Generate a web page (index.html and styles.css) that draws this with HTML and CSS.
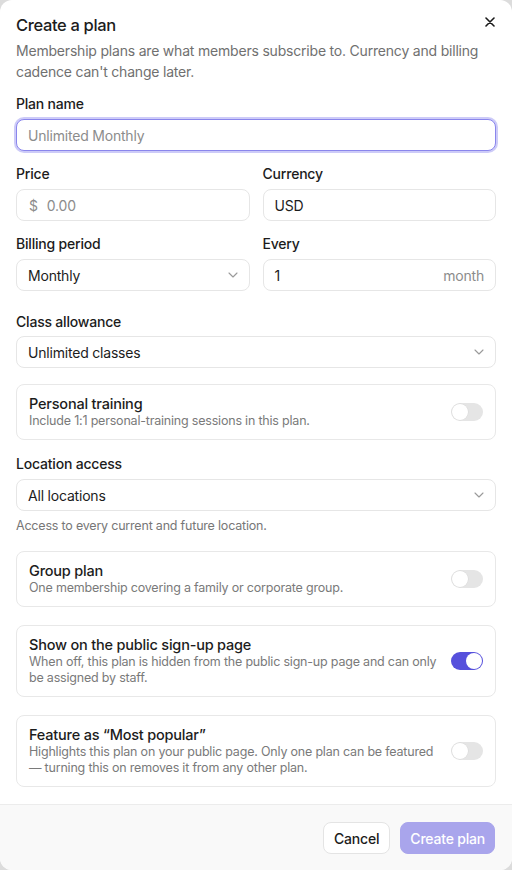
FILE: index.html
```html
<!DOCTYPE html>
<html lang="en">
<head>
<meta charset="utf-8">
<title>Create a plan</title>
<link rel="stylesheet" href="styles.css">
</head>
<body>
<div class="modal">
  <div class="body">
    <div class="header">
      <h1 class="title">Create a plan</h1>
      <button class="close" aria-label="Close">
        <svg width="10" height="10" viewBox="0 0 10 10"><path d="M1 1L9 9M9 1L1 9" stroke="#1a1a1a" stroke-width="1.6" stroke-linecap="round"/></svg>
      </button>
    </div>
    <p class="desc">Membership plans are what members subscribe to. Currency and billing cadence can't change later.</p>

    <div class="field f-name">
      <label class="label">Plan name</label>
      <div class="input focus"><span class="placeholder">Unlimited Monthly</span></div>
    </div>

    <div class="row f-row1">
      <div class="field">
        <label class="label">Price</label>
        <div class="input"><span class="prefix">$</span><span class="placeholder">0.00</span></div>
      </div>
      <div class="field">
        <label class="label">Currency</label>
        <div class="input"><span class="value">USD</span></div>
      </div>
    </div>

    <div class="row f-row2">
      <div class="field">
        <label class="label">Billing period</label>
        <div class="input select"><span class="value">Monthly</span>
          <svg class="chev" width="10" height="6" viewBox="0 0 10 6"><path d="M1 1L5 5L9 1" fill="none" stroke="#9a9a9a" stroke-width="1.1" stroke-linecap="round" stroke-linejoin="round"/></svg>
        </div>
      </div>
      <div class="field">
        <label class="label">Every</label>
        <div class="input select"><span class="value">1</span><span class="suffix">month</span></div>
      </div>
    </div>

    <div class="field f-class">
      <label class="label">Class allowance</label>
      <div class="input select"><span class="value">Unlimited classes</span>
        <svg class="chev" width="10" height="6" viewBox="0 0 10 6"><path d="M1 1L5 5L9 1" fill="none" stroke="#9a9a9a" stroke-width="1.1" stroke-linecap="round" stroke-linejoin="round"/></svg>
      </div>
    </div>

    <div class="card c-personal">
      <div class="card-text">
        <div class="card-title">Personal training</div>
        <div class="card-desc">Include 1:1 personal-training sessions in this plan.</div>
      </div>
      <span class="toggle"><span class="knob"></span></span>
    </div>

    <div class="field f-loc">
      <label class="label">Location access</label>
      <div class="input select"><span class="value">All locations</span>
        <svg class="chev" width="10" height="6" viewBox="0 0 10 6"><path d="M1 1L5 5L9 1" fill="none" stroke="#9a9a9a" stroke-width="1.1" stroke-linecap="round" stroke-linejoin="round"/></svg>
      </div>
      <div class="help">Access to every current and future location.</div>
    </div>

    <div class="card c-group">
      <div class="card-text">
        <div class="card-title">Group plan</div>
        <div class="card-desc">One membership covering a family or corporate group.</div>
      </div>
      <span class="toggle"><span class="knob"></span></span>
    </div>

    <div class="card c-show">
      <div class="card-text">
        <div class="card-title">Show on the public sign-up page</div>
        <div class="card-desc">When off, this plan is hidden from the public sign-up page and can only be assigned by staff.</div>
      </div>
      <span class="toggle on"><span class="knob"></span></span>
    </div>

    <div class="card c-feature">
      <div class="card-text">
        <div class="card-title">Feature as “Most popular”</div>
        <div class="card-desc">Highlights this plan on your public page. Only one plan can be featured — turning this on removes it from any other plan.</div>
      </div>
      <span class="toggle"><span class="knob"></span></span>
    </div>
  </div>

  <div class="footer">
    <button class="btn btn-cancel">Cancel</button>
    <button class="btn btn-primary">Create plan</button>
  </div>
</div>
</body>
</html>
```

FILE: styles.css
```css
* { box-sizing: border-box; }
html, body { margin: 0; padding: 0; }
body {
  background: #dcdcdc;
  font-family: Inter, "Noto Sans", "Liberation Sans", sans-serif;
  color: #1c1c1c;
  letter-spacing: -0.2px;
  -webkit-font-smoothing: antialiased;
}
.modal {
  width: 512px;
  height: 870px;
  background: #fff;
  border-radius: 12px;
  overflow: hidden;
  display: flex;
  flex-direction: column;
}
.body {
  flex: 1;
  padding: 13px 16px 0;
}
.header {
  display: flex;
  justify-content: space-between;
  align-items: center;
}
.title {
  margin: 0;
  font-size: 16.5px;
  line-height: 24px;
  font-weight: 450;
  letter-spacing: -0.35px;
}
.close {
  border: 0;
  background: none;
  padding: 0;
  width: 16px;
  height: 16px;
  display: flex;
  align-items: center;
  justify-content: center;
  margin-right: -2px;
  margin-top: -6px;
}
.desc {
  margin: 3px 0 0;
  font-size: 14px;
  line-height: 21px;
  color: #707070;
}
.field { display: flex; flex-direction: column; }
.label {
  font-size: 14px;
  line-height: 20px;
  font-weight: 450;
  margin-bottom: 5px;
}
.input {
  height: 32px;
  border: 1px solid #e6e6e6;
  border-radius: 8px;
  display: flex;
  align-items: center;
  padding: 0 11px;
  font-size: 14px;
  background: #fff;
}
.input.focus {
  border-color: #8a86ec;
  box-shadow: 0 0 0 2px #cdcbf8;
}
.placeholder { color: #8c8c8c; }
.prefix { color: #8c8c8c; margin: 0 9px 0 1px; }
.value { color: #1c1c1c; }
.suffix { margin-left: auto; color: #8c8c8c; }
.select .chev { margin-left: auto; }
.f-name { margin-top: 12px; }
.row {
  display: grid;
  grid-template-columns: 1fr 1fr;
  column-gap: 13px;
}
.f-row1 { margin-top: 13px; }
.f-row2 { margin-top: 13px; }
.f-class { margin-top: 21px; }
.f-class .label { margin-bottom: 4px; }
.help {
  margin-top: 6px;
  font-size: 12.5px;
  line-height: 18px;
  color: #777;
}
.f-loc { margin-top: 14px; }
.card {
  border: 1px solid #e8e8e8;
  border-radius: 8px;
  padding: 10px 12px;
  display: flex;
  align-items: center;
  gap: 12px;
}
.card-text { flex: 1; }
.card-title {
  font-size: 14.5px;
  line-height: 18px;
  font-weight: 450;
}
.card-desc {
  font-size: 12.5px;
  line-height: 16px;
  color: #7a7a7a;
}
.c-personal { margin-top: 16px; }
.c-group { margin-top: 16px; }
.c-show { margin-top: 18px; }
.c-feature { margin-top: 18px; }
.toggle {
  width: 32px;
  height: 18px;
  border-radius: 9px;
  background: #e5e5e5;
  position: relative;
  flex: none;
}
.knob {
  position: absolute;
  top: 1px;
  left: 1px;
  width: 16px;
  height: 16px;
  border-radius: 50%;
  background: #fff;
  box-shadow: 0 0 0 0.5px #d8d8d8;
}
.toggle.on { background: #5650dc; }
.toggle.on .knob { left: 15px; box-shadow: none; }
.footer {
  border-top: 1px solid #ececec;
  background: #f9f9f9;
  height: 66px;
  display: flex;
  justify-content: flex-end;
  align-items: flex-start;
  padding: 17px 17px 0;
  gap: 10px;
}
.btn {
  height: 32px;
  border-radius: 8px;
  font-family: inherit;
  font-size: 14px;
  font-weight: 450;
  letter-spacing: -0.2px;
  padding: 0 10px;
  white-space: nowrap;
}
.btn-cancel {
  background: #fff;
  border: 1px solid #e4e4e4;
  color: #1c1c1c;
}
.btn-primary {
  background: #a9a5ec;
  border: 1px solid #a9a5ec;
  color: #fff;
  padding: 0 9px;
}
```
